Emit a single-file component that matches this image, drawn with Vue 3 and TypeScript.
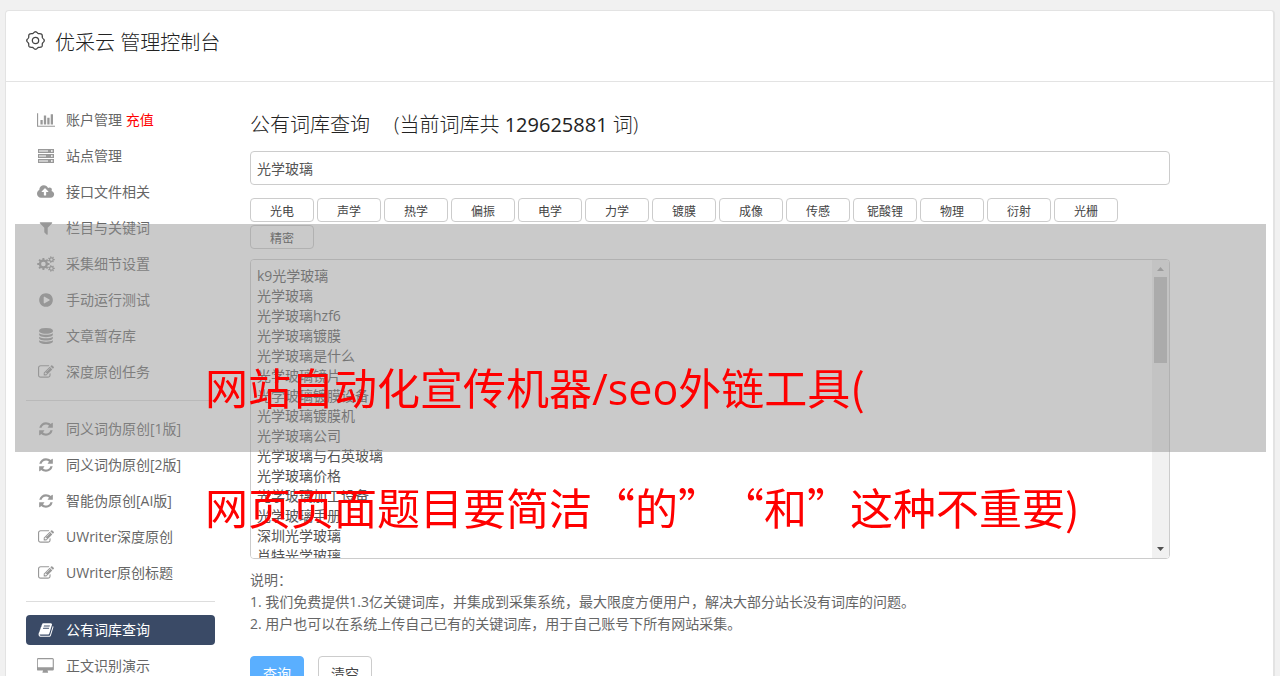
<script setup lang="ts">
import { ref } from 'vue'

interface Icon {
  box: string
  d: string
}

interface MenuItem {
  label: string
  icon: string
  hint?: string
  active?: boolean
}

/** Toothed wheel with a round hole. */
function gear(cx: number, cy: number, outer: number, inner: number, hole: number, teeth: number): string {
  const step = (Math.PI * 2) / teeth
  const at = (r: number, a: number) => `${(cx + r * Math.cos(a)).toFixed(2)} ${(cy + r * Math.sin(a)).toFixed(2)}`
  let d = ''
  for (let i = 0; i < teeth; i++) {
    const a = i * step
    d += `${i ? 'L' : 'M'}${at(inner, a - step * 0.28)}L${at(outer, a - step * 0.2)}L${at(outer, a + step * 0.2)}L${at(inner, a + step * 0.28)}`
  }
  return `${d}ZM${cx - hole} ${cy}a${hole} ${hole} 0 1 0 ${hole * 2} 0a${hole} ${hole} 0 1 0 ${-hole * 2} 0Z`
}

/** Closed wavy outline with evenly spread lobes. */
function wavy(c: number, radius: number, depth: number, lobes: number): string {
  const points: string[] = []
  for (let i = 0; i < 180; i++) {
    const a = (i / 180) * Math.PI * 2
    const r = radius + depth * Math.cos(a * lobes)
    points.push(`${(c + r * Math.sin(a)).toFixed(2)} ${(c - r * Math.cos(a)).toFixed(2)}`)
  }
  return `M${points.join('L')}Z`
}

const headerGear = wavy(9, 7.7, 0.6, 8)

const icons: Record<string, Icon> = {
  chart: {
    box: '0 0 2048 1792',
    d: 'M640 896v512h-256v-512h256zm384-512v1024h-256v-1024h256zm1024 1152v128h-2048v-1536h128v1408h1920zm-640-896v768h-256v-768h256zm384-384v1152h-256v-1152h256z',
  },
  server: {
    box: '0 0 16 16',
    d: 'M0 1h16v4H0zM1 2.500v1h9v-1zM13 2.200h1.600v1.600H13zM0 6h16v4H0zM1 7.500v1h7v-1zM13 7.200h1.600v1.600H13zM0 11h16v4H0zM1 12.500v1h9v-1zM13 12.200h1.600v1.600H13z',
  },
  upload: {
    box: '0 0 1920 1792',
    d: 'M1280 864q0-14-9-23l-352-352q-9-9-23-9t-23 9l-351 351q-10 12-10 24 0 14 9 23t23 9h224v352q0 13 9.5 22.5t22.5 9.5h192q13 0 22.5-9.5t9.5-22.5v-352h224q13 0 22.5-9.5t9.5-22.5zm640 288q0 159-112.5 271.5t-271.5 112.5h-1088q-185 0-316.5-131.5t-131.5-316.5q0-130 70-240t188-165q-2-30-2-43 0-212 150-362t362-150q156 0 285.5 87t188.5 231q71-62 166-62 106 0 181 75t75 181q0 76-41 138 130 31 213.5 135.5t83.5 238.5z',
  },
  filter: {
    box: '0 0 1792 1792',
    d: 'M1595 295q17 41-14 70l-493 493v742q0 42-39 59-13 5-25 5-27 0-45-19l-256-256q-19-19-19-45v-486l-493-493q-31-29-14-70 17-39 59-39h1280q42 0 59 39z',
  },
  cogs: {
    box: '0 0 18 16',
    d: gear(6.4, 8, 6.2, 4.6, 2.3, 8) + gear(14.4, 3.6, 3.4, 2.4, 1.2, 7) + gear(14.4, 12.4, 3.4, 2.4, 1.2, 7),
  },
  play: {
    box: '0 0 1792 1792',
    d: 'M896 128q209 0 385.5 103t279.5 279.5 103 385.5-103 385.5-279.5 279.5-385.5 103-385.5-103-279.5-279.5-103-385.5 103-385.5 279.5-279.5 385.5-103zm384 823q32-18 32-55t-32-55l-544-320q-31-19-64-1-32 19-32 56v640q0 37 32 56 16 8 32 8 17 0 32-9z',
  },
  database: {
    box: '0 0 1792 1792',
    d: 'M896 768q237 0 443-43t325-127v170q0 69-103 128t-280 93.5-385 34.5-385-34.5-280-93.5-103-128v-170q119 84 325 127t443 43zm0 768q237 0 443-43t325-127v170q0 69-103 128t-280 93.5-385 34.5-385-34.5-280-93.5-103-128v-170q119 84 325 127t443 43zm0-384q237 0 443-43t325-127v170q0 69-103 128t-280 93.5-385 34.5-385-34.5-280-93.5-103-128v-170q119 84 325 127t443 43zm0-1152q208 0 385 34.5t280 93.5 103 128v128q0 69-103 128t-280 93.5-385 34.5-385-34.5-280-93.5-103-128v-128q0-69 103-128t280-93.5 385-34.5z',
  },
  edit: {
    box: '0 0 1792 1792',
    d: 'M888 1184l116-116-152-152-116 116v56h96v96h56zm440-720q-16-16-33 1l-350 350q-17 17-1 33t33-1l350-350q17-17 1-33zm80 594v190q0 119-84.5 203.5t-203.5 84.5h-832q-119 0-203.5-84.5t-84.5-203.5v-832q0-119 84.5-203.5t203.5-84.5h832q63 0 117 25 15 7 18 23 3 17-9 29l-49 49q-14 14-32 8-23-6-45-6h-832q-66 0-113 47t-47 113v832q0 66 47 113t113 47h832q66 0 113-47t47-113v-126q0-13 9-22l64-64q15-15 35-7t20 29zm-96-738l288 288-672 672h-288v-288zm444 132l-92 92-288-288 92-92q28-28 68-28t68 28l152 152q28 28 28 68t-28 68z',
  },
  refresh: {
    box: '0 0 1792 1792',
    d: 'M1639 1056q0 5-1 7-64 268-268 434.5t-478 166.5q-146 0-282.5-55t-243.5-157l-129 129q-19 19-45 19t-45-19-19-45v-448q0-26 19-45t45-19h448q26 0 45 19t19 45-19 45l-137 137q71 66 161 102t187 36q134 0 250-65t186-179q11-17 53-117 8-23 30-23h192q13 0 22.5 9.5t9.5 22.5zm25-800v448q0 26-19 45t-45 19h-448q-26 0-45-19t-19-45 19-45l138-138q-148-137-349-137-134 0-250 65t-186 179q-11 17-53 117-8 23-30 23h-199q-13 0-22.5-9.5t-9.5-22.5v-7q65-268 270-434.5t480-166.5q146 0 284 55.5t245 156.5l130-129q19-19 45-19t45 19 19 45z',
  },
  book: {
    box: '0 0 1792 1792',
    d: 'M1703 478q40 57 18 129l-275 906q-19 64-76.5 107.5t-122.5 43.5h-923q-77 0-148.5-53.5t-99.5-131.5q-24-67-2-127 0-4 3-27t4-37q1-8-3-21.5t-3-19.5q2-11 8-21t16.5-23.5 16.5-23.5q23-38 45-91.5t30-91.5q3-10 .5-30t-.5-28q3-11 17-28t17-23q21-36 42-92t25-90q1-9-2.5-32t.5-28q4-13 22-30.5t22-22.5q19-26 42.5-84.5t27.5-96.5q1-8-3-25.5t-2-26.5q2-8 9-18t18-23 17-21q8-12 16.5-30.5t15-35 16-36 19.5-32 26.5-23.5 36-11.5 47.5 5.5l-1 3q38-9 51-9h761q74 0 114 56t18 130l-274 906q-36 119-71.5 153.5t-128.5 34.5h-869q-27 0-38 15-11 16-1 43 24 70 144 70h923q29 0 56-15.5t35-41.5l300-987q7-22 5-57 38 15 59 43zm-1064 2q-4 13 2 22.5t20 9.5h608q13 0 25.5-9.5t16.5-22.5l21-64q4-13-2-22.5t-20-9.5h-608q-13 0-25.5 9.5t-16.5 22.5zm-83 256q-4 13 2 22.5t20 9.5h608q13 0 25.5-9.5t16.5-22.5l21-64q4-13-2-22.5t-20-9.5h-608q-13 0-25.5 9.5t-16.5 22.5z',
  },
  desktop: {
    box: '-32 0 1920 1792',
    d: 'M1728 992v-832q0-13-9.5-22.5t-22.5-9.5h-1600q-13 0-22.5 9.5t-9.5 22.5v832q0 13 9.5 22.5t22.5 9.5h1600q13 0 22.5-9.5t9.5-22.5zm128-832v1088q0 66-47 113t-113 47h-544q0 37 16 77.5t32 71 16 43.5q0 26-19 45t-45 19h-512q-26 0-45-19t-19-45q0-14 16-44t32-70 16-78h-544q-66 0-113-47t-47-113v-1088q0-66 47-113t113-47h1600q66 0 113 47t47 113z',
  },
}

const menuGroups: MenuItem[][] = [
  [
    { label: '账户管理', icon: 'chart', hint: '充值' },
    { label: '站点管理', icon: 'server' },
    { label: '接口文件相关', icon: 'upload' },
    { label: '栏目与关键词', icon: 'filter' },
    { label: '采集细节设置', icon: 'cogs' },
    { label: '手动运行测试', icon: 'play' },
    { label: '文章暂存库', icon: 'database' },
    { label: '深度原创任务', icon: 'edit' },
  ],
  [
    { label: '同义词伪原创[1版]', icon: 'refresh' },
    { label: '同义词伪原创[2版]', icon: 'refresh' },
    { label: '智能伪原创[AI版]', icon: 'refresh' },
    { label: 'UWriter深度原创', icon: 'edit' },
    { label: 'UWriter原创标题', icon: 'edit' },
  ],
  [
    { label: '公有词库查询', icon: 'book', active: true },
    { label: '正文识别演示', icon: 'desktop' },
  ],
]

const tags = ['光电', '声学', '热学', '偏振', '电学', '力学', '镀膜', '成像', '传感', '铌酸锂', '物理', '衍射', '光栅', '精密']

const words = [
  'k9光学玻璃',
  '光学玻璃',
  '光学玻璃hzf6',
  '光学玻璃镀膜',
  '光学玻璃是什么',
  '光学玻璃镜片',
  '光学玻璃镀膜设备',
  '光学玻璃镀膜机',
  '光学玻璃公司',
  '光学玻璃与石英玻璃',
  '光学玻璃价格',
  '光学玻璃加工设备',
  '光学玻璃手册',
  '深圳光学玻璃',
  '肖特光学玻璃',
]

const query = ref('光学玻璃')
const results = ref(words.join('\n'))

function clearAll(): void {
  query.value = ''
  results.value = ''
}
</script>

<template>
  <div class="page">
    <div class="card">
      <header class="top">
        <svg class="top-icon" viewBox="0 0 18 18" aria-hidden="true">
          <path :d="headerGear" />
          <circle cx="9" cy="9" r="3" />
        </svg>
        <h1>优采云 管理控制台</h1>
      </header>

      <div class="body">
        <nav class="side">
          <ul v-for="(group, g) in menuGroups" :key="g" class="group">
            <li v-for="item in group" :key="item.label">
              <a href="#" class="item" :class="{ active: item.active }">
                <span class="icon-cell">
                  <svg class="icon" :viewBox="icons[item.icon].box" aria-hidden="true">
                    <path :d="icons[item.icon].d" fill-rule="evenodd" />
                  </svg>
                </span>
                <span class="label">{{ item.label }} <em v-if="item.hint" class="hint">{{ item.hint }}</em></span>
              </a>
            </li>
          </ul>
        </nav>

        <main class="main">
          <h2><label for="query">公有词库查询</label><span>(当前词库共 <span class="count">129625881</span> 词)</span></h2>
          <input id="query" v-model="query" class="query" type="text" />
          <div class="tags">
            <button v-for="tag in tags" :key="tag" type="button" class="tag" @click="query = tag">{{ tag }}</button>
          </div>
          <div class="results-box">
            <textarea v-model="results" class="results" aria-label="查询结果"></textarea>
            <div class="scrollbar" aria-hidden="true">
              <svg class="arrow" viewBox="0 0 17 17"><path d="M5 11h7L8.500 7z" fill="#a3a3a3" /></svg>
              <div class="track"><div class="thumb"></div></div>
              <svg class="arrow" viewBox="0 0 17 17"><path d="M5 6h7L8.500 10z" fill="#505050" /></svg>
            </div>
          </div>
          <div class="notes">
            <p>说明：</p>
            <p>1. 我们免费提供1.3亿关键词库，并集成到采集系统，最大限度方便用户，解决大部分站长没有词库的问题。</p>
            <p>2. 用户也可以在系统上传自己已有的关键词库，用于自己账号下所有网站采集。</p>
          </div>
          <div class="actions">
            <button type="button" class="btn primary">查询</button>
            <button type="button" class="btn" @click="clearAll">清空</button>
          </div>
        </main>
      </div>
    </div>

    <div class="band"></div>
    <div class="banner">
      <p>网站自动化宣传机器<span class="latin">/seo</span>外链工具(</p>
      <p>网页页面题目要简洁“的”“和”这种不重要)</p>
    </div>
  </div>
</template>

<style>
html,
body {
  background: #f1f1f1;
}
</style>

<style scoped>
.page {
  position: relative;
  height: 100vh;
  overflow: hidden;
  box-sizing: border-box;
  padding: 10px 5px 0;
  font-family: "Open Sans", "Noto Sans CJK SC", sans-serif;
  font-size: 14px;
  color: #666;
}

.page *,
.page *::before {
  box-sizing: border-box;
}

.card {
  min-height: 100%;
  background: #fff;
  border: 1px solid #e3e3e3;
  border-right-width: 2px;
  border-radius: 4px;
}

.top {
  display: flex;
  align-items: center;
  gap: 10px;
  height: 71px;
  padding: 0 20px 11px;
  border-bottom: 1px solid #e3e3e3;
}

.top-icon {
  width: 19px;
  height: 19px;
  fill: none;
  stroke: #444;
  stroke-width: 1.2;
}

h1,
h2 {
  margin: 0;
  font-size: 20px;
  line-height: 28px;
  font-weight: 300;
  color: #222;
}

h1 {
  padding-top: 4px;
}

.count {
  font-weight: 400;
}

.body {
  display: flex;
  gap: 35px;
  padding: 23px 20px;
}

.side {
  flex: none;
  width: 189px;
}

.group {
  display: flex;
  flex-direction: column;
  gap: 6px;
  margin: 0;
  padding: 0;
  list-style: none;
}

.group + .group {
  margin-top: 13px;
  padding-top: 13px;
  border-top: 1px solid #ddd;
}

.item {
  display: flex;
  align-items: center;
  gap: 10px;
  height: 30px;
  padding: 0 10px;
  border-radius: 4px;
  color: #666;
  text-decoration: none;
  white-space: nowrap;
}

.item.active {
  background: #3a4a66;
  color: #fff;
}

.label {
  padding-bottom: 2px;
}

.icon-cell {
  display: flex;
  justify-content: center;
  width: 20px;
}

.icon {
  height: 16px;
  max-width: 20px;
  fill: #999;
}

.active .icon {
  fill: #fff;
}

.hint {
  font-style: normal;
  color: #f00;
}

.main {
  flex: 1;
  max-width: 920px;
  padding-top: 6px;
}

h2 {
  display: flex;
  gap: 24px;
}

.query,
.results {
  display: block;
  width: 100%;
  border: 1px solid #ccc;
  border-radius: 4px;
  background: #fff;
  font: inherit;
  line-height: 20px;
  color: #555;
  outline: none;
}

.query {
  height: 34px;
  margin-top: 12px;
  padding: 6px;
}

.tags {
  display: flex;
  flex-wrap: wrap;
  gap: 3px;
  margin-top: 13px;
}

.tag {
  width: 64px;
  height: 24px;
  padding: 3px 0 0;
  border: 1px solid #ccc;
  border-radius: 4px;
  background: #fff;
  font: inherit;
  font-size: 12px;
  line-height: 19px;
  color: #444;
}

.results-box {
  position: relative;
  margin-top: 10px;
}

.results {
  height: 300px;
  padding: 6px 23px 6px 6px;
  resize: none;
}

.scrollbar {
  position: absolute;
  top: 1px;
  right: 1px;
  bottom: 1px;
  display: flex;
  flex-direction: column;
  width: 17px;
  border-radius: 0 3px 3px 0;
  background: #f1f1f1;
}

.arrow {
  flex: none;
  width: 17px;
  height: 17px;
}

.track {
  flex: 1;
  padding: 0 2px;
}

.thumb {
  height: 86px;
  background: #c1c1c1;
}

.notes {
  margin-top: 10px;
}

.notes p {
  margin: 0;
  line-height: 22px;
}

.actions {
  display: flex;
  gap: 14px;
  margin-top: 21px;
}

.btn {
  width: 54px;
  height: 34px;
  padding: 0;
  border: 1px solid #ccc;
  border-radius: 4px;
  background: #fff;
  font: inherit;
  color: #444;
}

.btn.primary {
  border-color: #5aafff;
  background: #5aafff;
  color: #fff;
}

.band {
  position: absolute;
  top: 224px;
  left: 15px;
  right: 14px;
  height: 228px;
  background: rgba(150, 150, 150, 0.5);
}

.banner {
  position: absolute;
  top: 326px;
  left: 205px;
  font-family: "Noto Sans CJK SC", sans-serif;
  font-size: 43px;
  line-height: 120px;
  text-spacing-trim: space-all;
  color: #f00;
  white-space: nowrap;
}

.banner p {
  margin: 0;
}

.latin {
  font-family: "Open Sans", sans-serif;
  line-height: 1;
}
</style>
